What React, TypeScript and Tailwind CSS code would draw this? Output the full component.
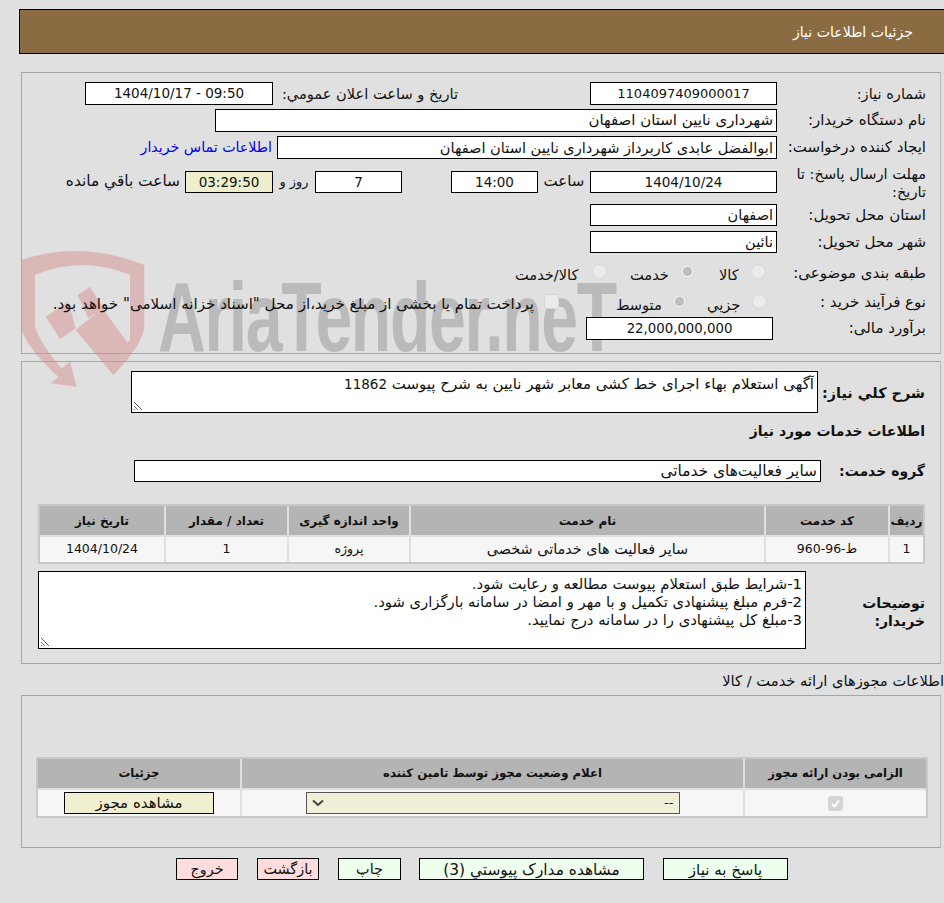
const label = "text-[15px] whitespace-nowrap";
const panel = "mr-[3px] w-[920px] border border-[#a6a6a6] border-r-[#bcbcbc]";
const tableFrame = "table-fixed border-separate border-spacing-[2px] bg-[#e0e0e0] [box-shadow:inset_0_0_0_2px_#c8c8c8]";

function Field({
  h = "h-[23px] leading-[21px]",
  bg = "bg-white",
  size = "text-[13.5px]",
  className = "",
  children,
}: {
  h?: string;
  bg?: string;
  size?: string;
  className?: string;
  children?: React.ReactNode;
}) {
  return (
    <div className={`${h} ${bg} ${size} overflow-hidden border border-black px-[3px] whitespace-nowrap ${className}`}>
      {children}
    </div>
  );
}

function Radio({ on = false }: { on?: boolean }) {
  return (
    <span className="flex h-[15px] w-[15px] shrink-0 items-center justify-center rounded-full border border-[#d6d6d6] bg-[#ebebeb]">
      {on && <span className="h-[9px] w-[9px] rounded-full bg-[#bdbdbd]" />}
    </span>
  );
}

function Option({ width, on = false, children }: { width: string; on?: boolean; children: React.ReactNode }) {
  return (
    <div className={`flex ${width} h-[15px] items-center justify-between whitespace-nowrap`}>
      <Radio on={on} />
      <span className="mt-[6px]">{children}</span>
    </div>
  );
}

function Grip() {
  return (
    <svg className="absolute bottom-[1px] left-[1px]" width="10" height="10" viewBox="0 0 10 10">
      <path d="M1 1 L9 9 M1 5 L5 9 M1 8 L2 9" stroke="#666" strokeWidth="1" />
    </svg>
  );
}

function Watermark() {
  return (
    <div dir="ltr" className="pointer-events-none absolute top-0 left-0 h-[400px] w-[640px]">
      {/* logo, coordinates taken at 3x */}
      <svg className="absolute top-[240px] left-[15px]" width="300" height="160" viewBox="0 0 900 480">
        <g fill="#dab8b8">
          <path d="M18 60 Q200 0 388 75 L388 265 Q375 325 295 405 L270 370 L345 300 L345 105 Q200 45 60 105 L60 260 Q75 310 140 385 L165 365 L185 440 L108 430 L130 410 Q30 320 18 260 Z" />
          <path d="M262 205 L345 318 L295 405 L182 270 Z" />
          <path d="M225 140 L265 205 L220 235 L188 165 Z" />
          <path d="M92 230 L160 185 L182 265 L135 298 Z" />
        </g>
      </svg>
      <div className="absolute top-[268px] left-[158px] origin-top-left font-['Liberation_Sans',sans-serif] text-[98px] leading-[98px] font-bold tracking-[-2px] whitespace-nowrap text-[#bababa] [transform:scaleX(0.675)]">
        AriaTender.neT
      </div>
    </div>
  );
}

export default function App() {
  return (
    <div dir="rtl" className="relative h-[903px] w-[944px] overflow-hidden bg-[#e0e0e0] font-['DejaVu_Sans',sans-serif] text-[14.6px] text-[#111]">
      <Watermark />

      <div className="relative pt-[9px]">
        <div className="flex h-[45px] w-[925px] items-center border-y border-l border-black bg-[#8b6b42] pt-[3px] pr-[31px] text-[14.1px] text-white">
          جزئیات اطلاعات نیاز
        </div>

        {/* main info */}
        <div className={`${panel} mt-[18px] h-[282px] pt-[9px] pr-[14px]`}>
          <div className="flex h-[23px] items-center">
            <div className="w-[149px] shrink-0 text-[14.6px] whitespace-nowrap">شماره نياز:</div>
            <Field size="text-[13px]" className="w-[187px] text-center">1104097409000017</Field>
            <div className="mr-[132px] w-[185px] text-[14.6px] whitespace-nowrap">تاریخ و ساعت اعلان عمومي:</div>
            <Field className="w-[188px] text-center"><span dir="ltr">1404/10/17 - 09:50</span></Field>
          </div>
          <div className="mt-[4px] flex h-[23px] items-center">
            <div className={`${label} w-[149px] shrink-0`}>نام دستگاه خریدار:</div>
            <Field size="text-[15px]" className="w-[562px]">شهرداری نایین استان اصفهان</Field>
          </div>
          <div className="mt-[4px] flex h-[23px] items-center">
            <div className={`${label} w-[149px] shrink-0`}>ایجاد کننده درخواست:</div>
            <Field size="text-[14.6px]" className="w-[500px]">ابوالفضل عابدی کاربرداز شهرداری نایین استان اصفهان</Field>
            <a className="mr-[5px] text-[14.2px] whitespace-nowrap text-[#0000ee]">اطلاعات تماس خریدار</a>
          </div>
          <div className="mt-[6px] flex h-[35px] items-start">
            <div className="w-[149px] shrink-0 text-[14.6px] leading-[18px]">
              مهلت ارسال پاسخ: تا
              <br />
              تاریخ:
            </div>
            <div className="mt-[5px] flex items-center">
              <Field h="h-[22px] leading-[20px]" className="w-[187px] text-center">1404/10/24</Field>
              <div className="w-[52px] text-center text-[15px] whitespace-nowrap">ساعت</div>
              <Field h="h-[22px] leading-[20px]" className="w-[87px] text-center">14:00</Field>
              <Field h="h-[22px] leading-[20px]" className="mr-[49px] w-[87px] text-center">7</Field>
              <div className="w-[42px] text-center text-[12.8px] whitespace-nowrap">روز و</div>
              <Field h="h-[22px] leading-[20px]" bg="bg-[#eeeecc]" className="w-[88px] text-center">03:29:50</Field>
              <div className="mr-[5px] text-[15.4px] whitespace-nowrap">ساعت باقي مانده</div>
            </div>
          </div>
          <div className="mt-[4px] flex h-[22px] items-center">
            <div className={`${label} w-[149px] shrink-0`}>استان محل تحویل:</div>
            <Field h="h-[22px] leading-[20px]" size="text-[14.5px]" className="w-[187px]">اصفهان</Field>
          </div>
          <div className="mt-[5px] flex h-[22px] items-center">
            <div className={`${label} w-[149px] shrink-0`}>شهر محل تحویل:</div>
            <Field h="h-[22px] leading-[20px]" size="text-[14.5px]" className="w-[187px]">نائین</Field>
          </div>
          <div className="mt-[8px] flex h-[21px] items-center">
            <div className={`${label} w-[149px] shrink-0 pt-[3px]`}>طبقه بندی موضوعی:</div>
            <div className="mr-[11px]"><Option width="w-[47px]">کالا</Option></div>
            <div className="mr-[24px]"><Option width="w-[65px]" on>خدمت</Option></div>
            <div className="mr-[23px]"><Option width="w-[92px]">کالا/خدمت</Option></div>
          </div>
          <div className="mt-[9px] flex h-[21px] items-center">
            <div className={`${label} w-[149px] shrink-0 pt-[2px]`}>نوع فرآیند خرید :</div>
            <div className="mr-[10px]"><Option width="w-[60px]">جزیي</Option></div>
            <div className="mr-[20px]"><Option width="w-[71px]" on>متوسط</Option></div>
            <span className="mr-[57px] h-[15px] w-[15px] shrink-0 rounded-[3px] border border-[#d6d6d6] bg-[#ebebeb]" />
            <span className="mt-[5px] mr-[10px] text-[15.1px] whitespace-nowrap">پرداخت تمام یا بخشی از مبلغ خرید،از محل "اسناد خزانه اسلامی" خواهد بود.</span>
          </div>
          <div className="mt-[5px] flex h-[23px] items-center">
            <div className={`${label} w-[153px] shrink-0`}>برآورد مالی:</div>
            <Field size="text-[13.3px]" className="w-[187px] text-center">22,000,000,000</Field>
          </div>
        </div>

        {/* description + services */}
        <div className={`${panel} mt-[7px] h-[303px] pt-[9px] pr-[15px]`}>
          <div className="flex items-start">
            <div className="w-[107px] shrink-0 pt-[12px] text-[14.4px] font-bold">شرح کلي نياز:</div>
            <div className="relative h-[42px] w-[687px] border border-black bg-white px-[3px] pt-[3px] text-[15px] leading-[18px]">
              آگهی استعلام بهاء اجرای خط کشی معابر شهر نایین به شرح پیوست <span className="text-[13.5px]">11862</span>
              <Grip />
            </div>
          </div>
          <div className="mt-[8px] text-[14px] leading-[21px] font-bold">اطلاعات خدمات مورد نياز</div>
          <div className="mt-[18px] flex items-center">
            <div className="w-[104px] shrink-0 text-[14px] font-bold">گروه خدمت:</div>
            <Field h="h-[22px] leading-[20px]" size="text-[15.4px]" className="w-[687px]">سایر فعالیت‌های خدماتی</Field>
          </div>

          <table className={`${tableFrame} mt-[22px] w-[887px] text-[12.5px]`}>
            <thead>
              <tr className="h-[29px] bg-[#b4b4b4] text-[12px]">
                <th className="w-[33px] font-bold">ردیف</th>
                <th className="w-[122px] font-bold">کد خدمت</th>
                <th className="font-bold">نام خدمت</th>
                <th className="w-[120px] font-bold">واحد اندازه گیری</th>
                <th className="w-[121px] font-bold">تعداد / مقدار</th>
                <th className="w-[124px] font-bold">تاریخ نیاز</th>
              </tr>
            </thead>
            <tbody>
              <tr className="h-[25px] bg-[#f6f6f6] text-center">
                <td>1</td>
                <td>ط-96-960</td>
                <td className="text-[14.4px]">سایر فعالیت های خدماتی شخصی</td>
                <td>پروژه</td>
                <td>1</td>
                <td>1404/10/24</td>
              </tr>
            </tbody>
          </table>

          <div className="mt-[7px] flex items-center">
            <div className="w-[119px] shrink-0 pt-[4px] text-[14px] leading-[18px] font-bold">
              توضیحات
              <br />
              خریدار:
            </div>
            <div className="relative h-[78px] w-[768px] border border-black bg-white px-[3px] pt-[3px] text-[14.8px] leading-[18px]">
              <div>1-شرایط طبق استعلام پیوست مطالعه و رعایت شود.</div>
              <div>2-فرم مبلغ پیشنهادی تکمیل و با مهر و امضا در سامانه بارگزاری شود.</div>
              <div>3-مبلغ کل پیشنهادی را در سامانه درج نمایید.</div>
              <Grip />
            </div>
          </div>
        </div>

        <div className="mt-[8px] h-[23px] text-[14.7px] leading-[18px]">اطلاعات مجوزهای ارائه خدمت / کالا</div>

        {/* licences */}
        <div className={`${panel} h-[153px] pt-[61px] pr-[12px]`}>
          <table className={`${tableFrame} w-[892px] text-[13px]`}>
            <thead>
              <tr className="h-[29px] bg-[#b4b4b4] text-[11.7px]">
                <th className="w-[181px] font-bold">الزامی بودن ارائه مجوز</th>
                <th className="font-bold">اعلام وضعیت مجوز توسط تامین کننده</th>
                <th className="w-[202px] font-bold">جزئیات</th>
              </tr>
            </thead>
            <tbody>
              <tr className="h-[26px] bg-[#f6f6f6] text-center">
                <td>
                  <span className="inline-flex h-[15px] w-[15px] items-center justify-center rounded-[3px] bg-[#d4d4d4] align-middle">
                    <svg width="11" height="11" viewBox="0 0 11 11" fill="none"><path d="M2 6 L4.5 8.5 L9 2.5" stroke="#fff" strokeWidth="2" /></svg>
                  </span>
                </td>
                <td>
                  <div className="mx-auto flex h-[22px] w-[374px] items-center justify-between border border-[#555] bg-[#f0f0d8] px-[5px] text-[13px]">
                    <span>--</span>
                    <svg width="12" height="8" viewBox="0 0 12 8" fill="none"><path d="M1 1.5 L6 6 L11 1.5" stroke="#444" strokeWidth="2" /></svg>
                  </div>
                </td>
                <td>
                  <button className="mx-auto block h-[22px] w-[150px] border border-black bg-[#f0f0d0] text-[15px] leading-[20px]">مشاهده مجوز</button>
                </td>
              </tr>
            </tbody>
          </table>
        </div>

        <div className="mt-[10px] mr-[156px] flex gap-[19px]">
          <button className="h-[22px] w-[125px] border border-black bg-[#eeffee] text-[15px]">پاسخ به نیاز</button>
          <button className="h-[22px] w-[225px] border border-black bg-[#eeffee] text-[15.4px]">مشاهده مدارک پیوستي (3)</button>
          <button className="-mr-[1px] h-[22px] w-[63px] border border-black bg-[#eeffee] text-[14.4px]">چاپ</button>
          <button className="h-[22px] w-[62px] border border-black bg-[#ffdddd] text-[14.4px]">بازگشت</button>
          <button className="h-[22px] w-[62px] border border-black bg-[#ffdddd] text-[14.4px]">خروج</button>
        </div>
      </div>
    </div>
  );
}
